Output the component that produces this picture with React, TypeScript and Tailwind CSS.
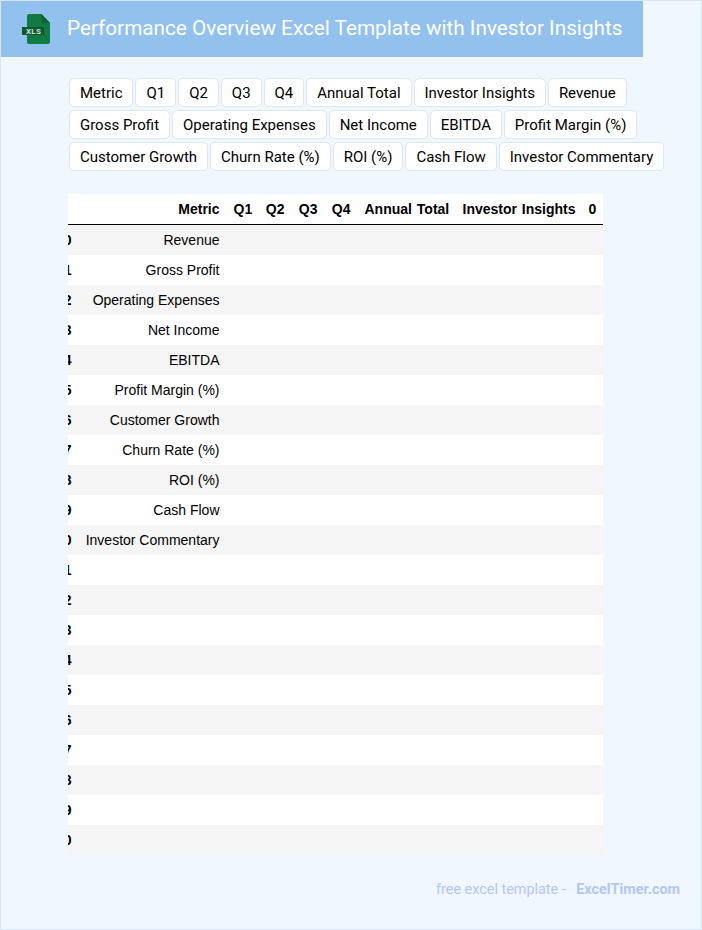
const PILLS = [
  "Metric", "Q1", "Q2", "Q3", "Q4", "Annual Total", "Investor Insights", "Revenue",
  "Gross Profit", "Operating Expenses", "Net Income", "EBITDA", "Profit Margin (%)",
  "Customer Growth", "Churn Rate (%)", "ROI (%)", "Cash Flow", "Investor Commentary",
];

const METRICS = [
  "Revenue", "Gross Profit", "Operating Expenses", "Net Income", "EBITDA", "Profit Margin (%)",
  "Customer Growth", "Churn Rate (%)", "ROI (%)", "Cash Flow", "Investor Commentary",
];

const COLS = [
  { label: "Q1", width: "w-[32px]" },
  { label: "Q2", width: "w-[33px]" },
  { label: "Q3", width: "w-[33px]" },
  { label: "Q4", width: "w-[33px]" },
  { label: "Annual Total", width: "w-[98px]" },
  { label: "Investor Insights", width: "w-[126px]" },
  { label: "0", width: "w-[21.5px]" },
];

const ROWS = Array.from({ length: 21 }, (_, i) => i);

function XlsIcon() {
  return (
    <svg width="29" height="32" viewBox="0 0 29 32" className="shrink-0">
      <path d="M5 3 a2 2 0 0 1 2-2 h12.5 l8.5 9 v19 a2 2 0 0 1-2 2 H7 a2 2 0 0 1-2-2 Z" fill="#107a42" />
      <path d="M19.5 1 l8.5 9 h-6.5 a2 2 0 0 1-2-2 Z" fill="#0c6336" />
      <rect x="0" y="14" width="22" height="8" fill="#0b5a30" />
      <text x="4" y="21" fontSize="8" letterSpacing="0.3" fontWeight="500" fill="#e6f4ea" className="font-['Roboto',sans-serif]">XLS</text>
    </svg>
  );
}

export default function App() {
  return (
    <div className="h-[930px] w-[702px] overflow-hidden border border-[#d9e4f2] bg-[#f0f7ff] font-['Roboto',sans-serif]">
      <div className="flex h-[56px] w-[642px] items-center bg-[#92c1ed] pl-[21px]">
        <XlsIcon />
        <h1 className="mt-[-1px] ml-[16px] text-[20.72px] font-normal whitespace-nowrap text-white">
          Performance Overview Excel Template with Investor Insights
        </h1>
      </div>

      <div className="mt-[21px] ml-[68px] flex w-[600px] flex-wrap gap-x-[2px] gap-y-[3px]">
        {PILLS.map((p) => (
          <span
            key={p}
            className="h-[29px] rounded-[5px] border border-[#dde6f2] bg-white px-[9.98px] text-[15px] leading-[28px] text-black"
          >
            {p}
          </span>
        ))}
      </div>

      <div className="mt-[23px] ml-[67px] w-[536px] overflow-hidden">
        <table className="ml-[-19.5px] w-[554.5px] table-fixed border-separate border-spacing-0 font-['Liberation_Sans',sans-serif] text-[14px] text-black">
          <thead>
            <tr className="h-[31px] bg-white">
              <th className="w-[30px] border-b border-black" />
              <th className="w-[148px] border-b border-black px-[7px] text-right font-bold">Metric</th>
              {COLS.map((c) => (
                <th key={c.label} className={`${c.width} border-b border-black px-[7px] text-right font-bold whitespace-nowrap [word-spacing:1px]`}>
                  {c.label}
                </th>
              ))}
            </tr>
          </thead>
          <tbody>
            {ROWS.map((i) => (
              <tr key={i} className={i % 2 === 0 ? "h-[30px] bg-[#f5f5f5]" : "h-[30px] bg-white"}>
                <th className="px-[7px] text-right font-bold">{i}</th>
                <td className="px-[7px] text-right whitespace-nowrap">{METRICS[i] ?? ""}</td>
                {COLS.map((c) => (
                  <td key={c.label} />
                ))}
              </tr>
            ))}
          </tbody>
        </table>
      </div>

      <div className="mt-[24px] mr-[21px] flex justify-end text-[14.4px] text-[#b3c6f5]">
        <span>free excel template -</span>
        <span className="ml-[10.5px] font-bold">ExcelTimer.com</span>
      </div>
    </div>
  );
}
